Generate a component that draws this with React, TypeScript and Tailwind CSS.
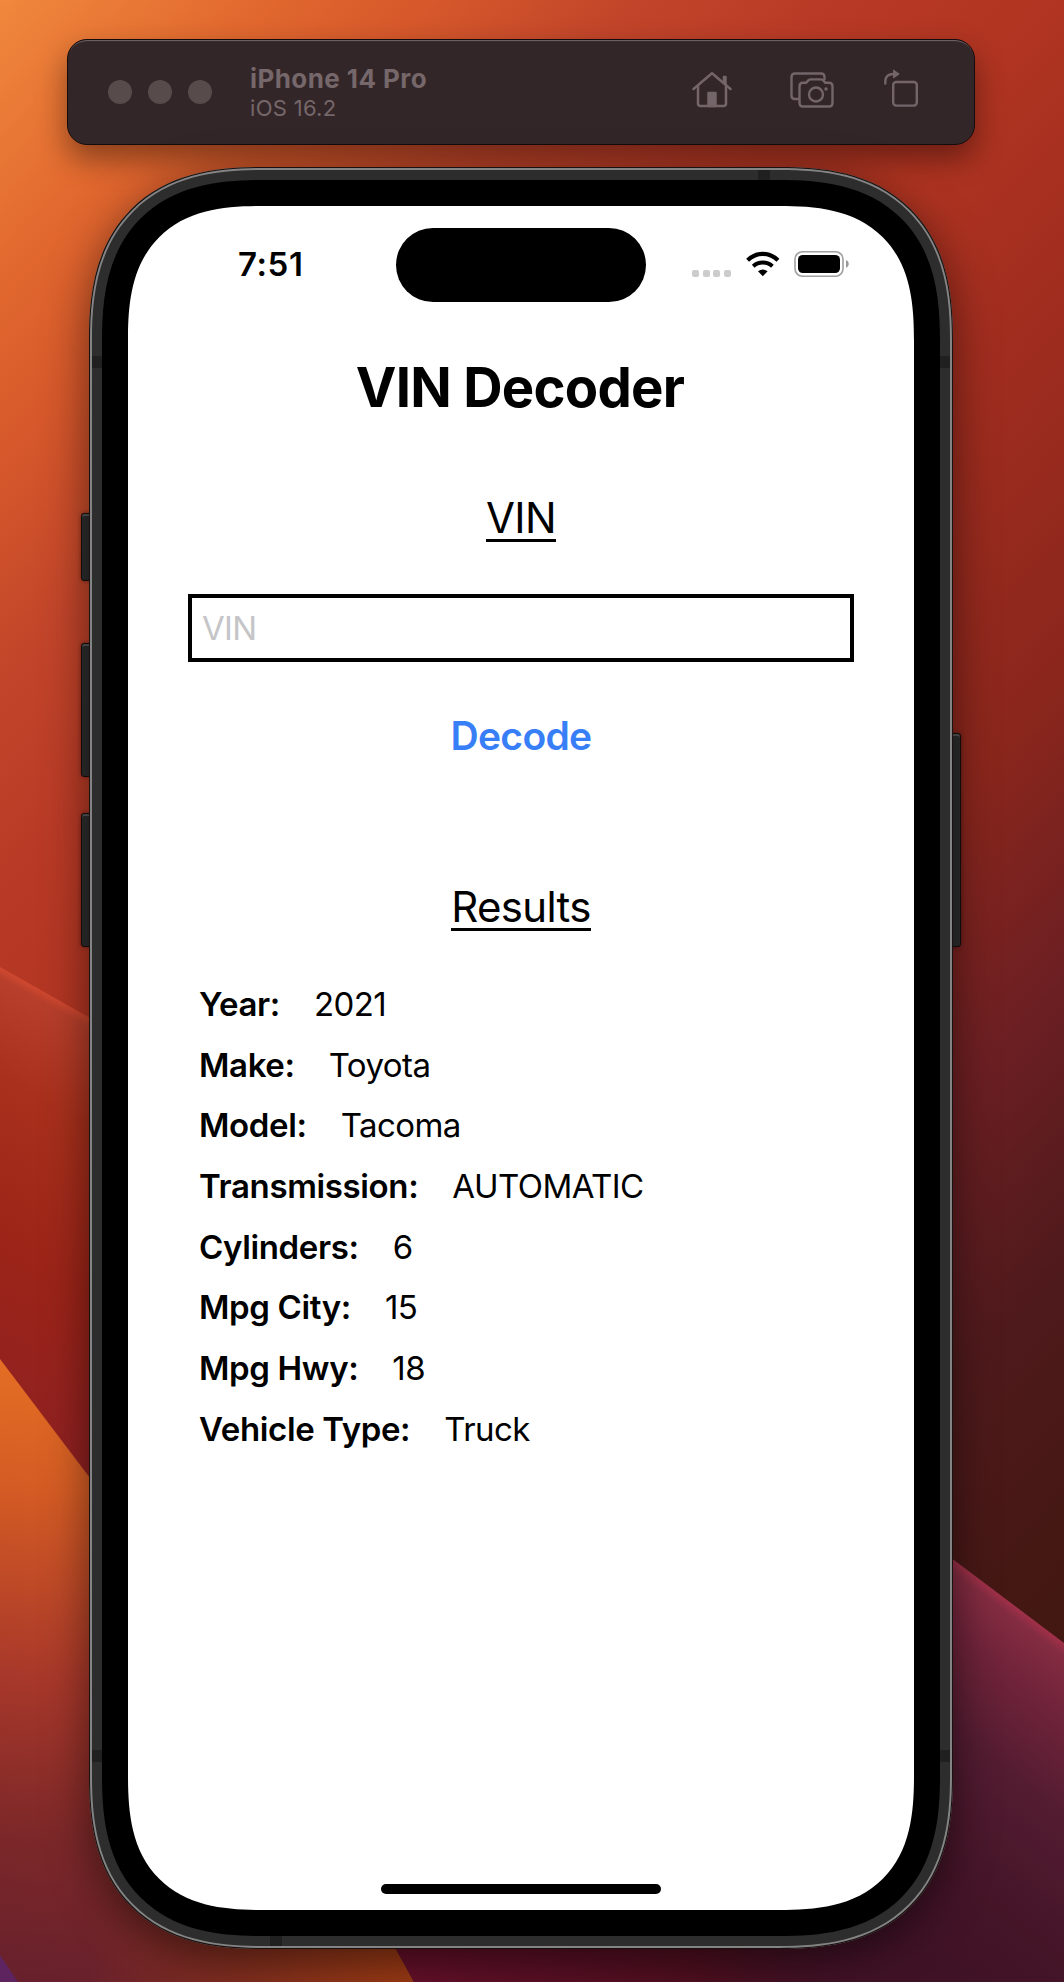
import React from "react";

const results = [
  ["Year:", "2021"],
  ["Make:", "Toyota"],
  ["Model:", "Tacoma"],
  ["Transmission:", "AUTOMATIC"],
  ["Cylinders:", "6"],
  ["Mpg City:", "15"],
  ["Mpg Hwy:", "18"],
  ["Vehicle Type:", "Truck"],
];

function Wallpaper() {
  return (
    <svg className="absolute inset-0" width="1064" height="1982" viewBox="0 0 1064 1982">
      <defs>
        <linearGradient id="sky" gradientUnits="userSpaceOnUse" x1="0" y1="0" x2="1357" y2="1265">
          <stop offset="0" stopColor="#f0883d" />
          <stop offset="0.1" stopColor="#e2692f" />
          <stop offset="0.17" stopColor="#d6582b" />
          <stop offset="0.25" stopColor="#c2452a" />
          <stop offset="0.33" stopColor="#b83a26" />
          <stop offset="0.42" stopColor="#b03421" />
          <stop offset="0.52" stopColor="#a12d1f" />
          <stop offset="0.67" stopColor="#8a261c" />
          <stop offset="0.78" stopColor="#6c1f23" />
          <stop offset="0.88" stopColor="#501a1c" />
          <stop offset="1" stopColor="#431712" />
        </linearGradient>
        <linearGradient id="ridge" gradientUnits="userSpaceOnUse" x1="0" y1="967" x2="-235" y2="1385">
          <stop offset="0" stopColor="#d0482f" />
          <stop offset="0.02" stopColor="#b73f2b" />
          <stop offset="0.2" stopColor="#a8301c" />
          <stop offset="0.5" stopColor="#9c2418" />
          <stop offset="1" stopColor="#8a1f26" />
        </linearGradient>
        <linearGradient id="flame" gradientUnits="userSpaceOnUse" x1="0" y1="1358" x2="-60" y2="1982">
          <stop offset="0" stopColor="#e46e24" />
          <stop offset="0.2" stopColor="#d55c24" />
          <stop offset="0.5" stopColor="#a8382a" />
          <stop offset="0.75" stopColor="#7d2829" />
          <stop offset="1" stopColor="#66202c" />
        </linearGradient>
        <linearGradient id="plum" gradientUnits="userSpaceOnUse" x1="1008" y1="1601" x2="808" y2="1864">
          <stop offset="0" stopColor="#a03049" />
          <stop offset="0.03" stopColor="#842c41" />
          <stop offset="0.16" stopColor="#72243b" />
          <stop offset="0.42" stopColor="#531c31" />
          <stop offset="0.77" stopColor="#441427" />
          <stop offset="1" stopColor="#401226" />
        </linearGradient>
        <linearGradient id="ember" gradientUnits="userSpaceOnUse" x1="90" y1="0" x2="410" y2="0">
          <stop offset="0" stopColor="#a04010" stopOpacity="0" />
          <stop offset="1" stopColor="#9c3a14" stopOpacity="1" />
        </linearGradient>
        <linearGradient id="wine" gradientUnits="userSpaceOnUse" x1="400" y1="0" x2="900" y2="0">
          <stop offset="0" stopColor="#66102a" />
          <stop offset="0.6" stopColor="#500f20" />
          <stop offset="1" stopColor="#401226" stopOpacity="0" />
        </linearGradient>
      </defs>
      <rect width="1064" height="1982" fill="url(#sky)" />
      <path d="M0 967L120 1035V1600H0Z" fill="url(#ridge)" />
      <path d="M0 1359L90 1478Q300 1760 414 1982H0Z" fill="url(#flame)" />
      <path d="M90 1780H330L414 1982H90Z" fill="url(#ember)" />
      <path d="M380 1920L930 1542L1064 1643V1982H414Z" fill="url(#plum)" />
      <path d="M380 1920H930V1982H414Z" fill="url(#wine)" />
      <path d="M0 1955L18 1982H0Z" fill="#5d2460" />
    </svg>
  );
}

function HomeIcon() {
  return (
    <svg width="40" height="38" viewBox="0 0 40 38" fill="none" stroke="#73656a" strokeWidth="2.5" strokeLinecap="round" strokeLinejoin="round">
      <path d="M1.500 18L20 2.200L38.500 18" />
      <path d="M6 15V32.500Q6 35 8.500 35H31.500Q34 35 34 32.500V15" />
      <path d="M32 11V6H33.500V13" />
      <path d="M16.500 35V22H23.500V35Z" fill="#73656a" />
    </svg>
  );
}

function ScreenshotIcon() {
  return (
    <svg width="44" height="36" viewBox="0 0 44 36" fill="none" stroke="#73656a" strokeWidth="2.4" strokeLinejoin="round" strokeLinecap="round">
      <path d="M8.500 27H5Q1.500 27 1.500 23.500V5Q1.500 1.500 5 1.500H31Q34.500 1.500 34.500 5V7" />
      <path d="M13 10.800H16L18.500 8.200Q19.500 7.400 20.500 7.400H31Q32 7.400 33 8.200L35.500 10.800H39Q42.500 10.800 42.500 14.300V31Q42.500 34.500 39 34.500H13Q9.500 34.500 9.500 31V14.300Q9.500 10.800 13 10.800Z" />
      <circle cx="26" cy="22.500" r="7" />
      <circle cx="36" cy="17" r="1.700" fill="#73656a" stroke="none" />
    </svg>
  );
}

function RotateIcon() {
  return (
    <svg width="34" height="38" viewBox="0 0 34 38" fill="none" stroke="#73656a" strokeWidth="2.400" strokeLinecap="round" strokeLinejoin="round">
      <rect x="9.200" y="13" width="23.600" height="23.600" rx="3" />
      <path d="M1.300 14.500V12.500Q1.300 5 9.500 5" />
      <path d="M9.800 1.300L15.200 5L9.800 8.700Z" fill="#73656a" strokeWidth="1" />
    </svg>
  );
}

function WifiIcon() {
  return (
    <svg width="34" height="26" viewBox="0 0 34 26" fill="none" stroke="#000" strokeWidth="4.2">
      <path d="M1.600 9.200Q8.300 2.800 16.800 2.800T32 9.200" />
      <path d="M7.200 15.200Q11.300 11.500 16.800 11.500T26.400 15.200" strokeWidth="4" />
      <path d="M12 20.300Q16.800 16.500 21.600 20.300L16.800 25.200Z" fill="#000" stroke="none" />
    </svg>
  );
}

function BatteryIcon() {
  return (
    <svg width="56" height="28" viewBox="0 0 56 28" fill="none">
      <rect x="1" y="1.700" width="48" height="24.600" rx="7.500" stroke="#a0a0a0" strokeWidth="1.600" />
      <rect x="4" y="4.900" width="42" height="18.200" rx="4.800" fill="#000" />
      <path d="M52 10Q54.800 11.200 54.800 14T52 18Z" fill="#999" />
    </svg>
  );
}

function TitleBar() {
  return (
    <header className="relative mt-[39px] ml-[67px] flex h-[106px] w-[908px] items-center rounded-[20px] border border-[#140c0c] bg-[#332628] pl-10 shadow-[inset_0_2px_1px_-1px_#75656a,0_14px_30px_rgba(0,0,0,0.4)]">
      <div className="flex gap-4">
        <span className="size-6 rounded-full bg-[#584b4b]" />
        <span className="size-6 rounded-full bg-[#584b4b]" />
        <span className="size-6 rounded-full bg-[#584b4b]" />
      </div>
      <div className="mt-[2px] ml-[38px] flex flex-col text-[#75676a]">
        <span className="text-[26px] leading-[30px] font-bold tracking-[0.42px]">iPhone 14 Pro</span>
        <span className="text-[22px] leading-[28px] tracking-[0.3px]">iOS 16.2</span>
      </div>
      <div className="mr-[56px] ml-auto flex items-center">
        <span className="mr-[58px] mb-1"><HomeIcon /></span>
        <span className="mr-[50px] mb-1"><ScreenshotIcon /></span>
        <span className="mb-2"><RotateIcon /></span>
      </div>
    </header>
  );
}

function StatusBar() {
  return (
    <div className="flex h-[118px] items-start">
      <div className="mt-[38px] ml-[110px] w-[158px] text-[33px] leading-10 font-semibold tracking-[0.6px]">7:51</div>
      <div className="mt-[22px] h-[74px] w-[250px] rounded-full bg-black" />
      <div className="mt-[44px] ml-[46px] flex items-center">
        <div className="mt-[18px] flex gap-[3.700px]">
          <span className="size-[7px] rounded-[2px] bg-[#ccc]" />
          <span className="size-[7px] rounded-[2px] bg-[#ccc]" />
          <span className="size-[7px] rounded-[2px] bg-[#ccc]" />
          <span className="size-[7px] rounded-[2px] bg-[#ccc]" />
        </div>
        <span className="ml-[15px]"><WifiIcon /></span>
        <span className="ml-[14px]"><BatteryIcon /></span>
      </div>
    </div>
  );
}

function SideButton({ className }: { className: string }) {
  return <span className={"absolute border border-[#160e0c] bg-[#2d2d2d] shadow-[inset_0_2px_0_#555,0_0_4px_rgba(0,0,0,0.4)] " + className} />;
}

export default function App() {
  return (
    <div className="relative h-[1982px] w-[1064px] overflow-hidden font-['Inter',sans-serif] text-black">
      <Wallpaper />
      <TitleBar />
      <main className="relative mt-[22px] ml-[89px] h-[1782px] w-[864px]">
        <SideButton className="top-[346px] -left-[8px] h-[68px] w-[12px] rounded-l-[3px]" />
        <SideButton className="top-[476px] -left-[8px] h-[134px] w-[12px] rounded-l-[3px]" />
        <SideButton className="top-[646px] -left-[8px] h-[134px] w-[12px] rounded-l-[3px]" />
        <SideButton className="top-[566px] -right-[8px] h-[214px] w-[12px] rounded-r-[3px]" />
        <div className="relative h-full w-full rounded-[173px] bg-[#848484] p-[3px] [corner-shape:superellipse(1.31)] shadow-[inset_0_0_0_1px_#1a1210,0_12px_44px_rgba(0,0,0,0.5)]">
          <div className="relative h-full w-full overflow-hidden rounded-[170px] bg-[#2d2d2d] p-[10px] [corner-shape:superellipse(1.31)]">
            <span className="absolute top-0 left-[666px] h-3 w-3 bg-[#202020]" />
            <span className="absolute bottom-0 left-[178px] h-3 w-3 bg-[#202020]" />
            <span className="absolute top-[186px] left-0 h-3 w-full bg-[#202020]" />
            <span className="absolute bottom-[184px] left-0 h-3 w-full bg-[#202020]" />
            <div className="relative h-full w-full rounded-[161px] bg-black p-[26px] [corner-shape:superellipse(1.34)]">
              <section className="relative flex h-[1704px] w-[786px] flex-col rounded-[135px] bg-white [corner-shape:superellipse(1.4)]">
                <StatusBar />
                <h1 className="mt-[29px] pr-[2px] text-center text-[54.500px] leading-[68px] font-bold tracking-[-0.75px]">VIN Decoder</h1>
                <h2 className="mt-[76px] self-center border-b-[3px] border-black text-[42px] leading-[42px] tracking-[-0.7px]">VIN</h2>
                <div className="mt-[52px] ml-[60px] flex h-[68px] w-[666px] items-center border-4 border-black pt-[2px] pl-[10px] text-[33px] tracking-[-0.7px] text-[#c5c5c7]">VIN</div>
                <button className="mt-[49px] self-center text-[39px] leading-[50px] font-semibold tracking-[-0.7px] text-[#387ef7]">Decode</button>
                <h2 className="mt-[125px] self-center border-b-[3px] border-black text-[42px] leading-[42px] tracking-[-0.7px]">Results</h2>
                <dl className="mt-[43.500px] ml-[71px] flex flex-col">
                  {results.map(([label, value]) => (
                    <div key={label} className="flex h-[60.670px] items-center text-[33px]">
                      <dt className="font-semibold tracking-[-0.36px]">{label}</dt>
                      <dd className="ml-[34px] tracking-[-0.55px]">{value}</dd>
                    </div>
                  ))}
                </dl>
                <div className="mt-auto mb-4 h-[10px] w-[280px] self-center rounded-full bg-black" />
              </section>
            </div>
          </div>
        </div>
      </main>
    </div>
  );
}
